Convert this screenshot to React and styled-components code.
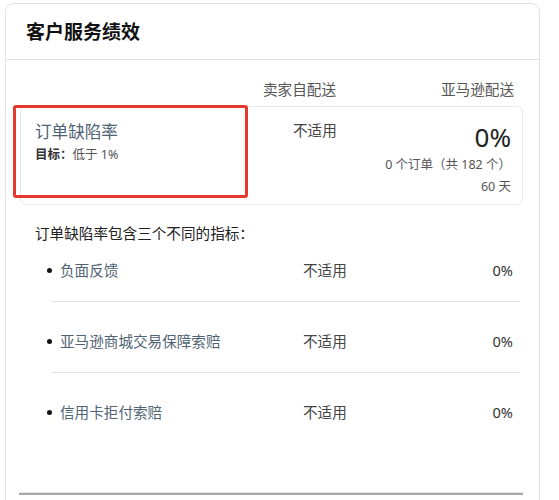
import React from "react";
import styled, { createGlobalStyle } from "styled-components";

const Global = createGlobalStyle`
  html, body { margin: 0; padding: 0; background: #ffffff; }
  body {
    font-family: "Noto Sans", "Noto Sans CJK SC", sans-serif;
    color: #333;
    overflow: hidden;
  }
`;

const Card = styled.section`
  box-sizing: border-box;
  margin: 3px 0 0 5px;
  width: 535px;
  min-height: 620px;
  border: 1px solid #e3e3e3;
  border-radius: 8px;
  background: #fff;
`;

const Header = styled.header`
  height: 55px;
  display: flex;
  align-items: center;
  padding: 0 20px;
  border-bottom: 1px solid #e3e3e3;
`;

const Title = styled.h2`
  margin: -1px 0 0;
  font-size: 19px;
  font-weight: 700;
  color: #111;
`;

const Body = styled.div`
  padding: 0 16px 0 14px;
`;

const ColHeads = styled.div`
  display: grid;
  grid-template-columns: 243px 1fr auto;
  padding: 19px 9px 7px 0;
  font-size: 14.6px;
  line-height: 20px;
  color: #555;
`;

const MetricBox = styled.div`
  position: relative;
  box-sizing: border-box;
  height: 99px;
  display: grid;
  grid-template-columns: 258px 1fr auto;
  padding: 14px 11px 0 14px;
  border: 1px solid #e8e8e8;
  border-radius: 6px;
`;

const Highlight = styled.div`
  position: absolute;
  left: -8px;
  top: -2px;
  width: 235px;
  height: 93px;
  box-sizing: border-box;
  border: 3px solid #e5392e;
  border-radius: 3px;
  pointer-events: none;
`;

const Col = styled.div`
  display: flex;
  flex-direction: column;
  align-items: ${(p) => (p.$right ? "flex-end" : "flex-start")};
`;

const MetricName = styled.div`
  font-size: 16.6px;
  line-height: 22px;
  color: #4d6376;
`;

const Goal = styled.div`
  margin-top: 3px;
  font-size: 12.5px;
  line-height: 18px;
  color: #555;
  b { font-weight: 700; color: #333; }
`;

const NA = styled.div`
  font-size: 14.6px;
  line-height: 20px;
  color: #444;
  margin-top: ${(p) => p.$offset || 0}px;
`;

const BigValue = styled.div`
  font-size: 26px;
  line-height: 32px;
  color: #222;
`;

const Small = styled.div`
  margin-top: 2px;
  font-size: 12.5px;
  line-height: 20px;
  color: #555;
`;

const Desc = styled.p`
  margin: 18px 0 0 15px;
  font-size: 14.6px;
  line-height: 20px;
  color: #222;
`;

const List = styled.ul`
  list-style: none;
  margin: 0 3px 0 32px;
  padding: 0;
`;

const Row = styled.li`
  display: grid;
  grid-template-columns: 251px 1fr auto;
  align-items: center;
  padding: 29px 7px 21px 0;
  font-size: 14.6px;
  line-height: 20px;
  border-bottom: 1px solid #e2e2e2;
  &:first-child { padding-top: 17px; }
  &:last-child { border-bottom: none; }
`;

const Name = styled.span`
  display: flex;
  align-items: center;
  gap: 8px;
  margin-left: -5px;
  color: #4f6374;
`;

const Dot = styled.i`
  width: 5px;
  height: 5px;
  border-radius: 50%;
  background: #111;
  flex: none;
`;

const Cell = styled.span`
  color: ${(p) => p.$color || "#444"};
  text-align: ${(p) => (p.$right ? "right" : "left")};
`;

const Footer = styled.div`
  margin: 50px 0 0 -1px;
  height: 2px;
  background: #a9a9a9;
  box-shadow: 0 -1px 0 #e4e4e4;
`;

const items = [
  { name: "负面反馈", self: "不适用", fba: "0%" },
  { name: "亚马逊商城交易保障索赔", self: "不适用", fba: "0%" },
  { name: "信用卡拒付索赔", self: "不适用", fba: "0%" },
];

export default function App() {
  return (
    <>
      <Global />
      <Card>
        <Header>
          <Title>客户服务绩效</Title>
        </Header>
        <Body>
          <ColHeads>
            <span />
            <span>卖家自配送</span>
            <span>亚马逊配送</span>
          </ColHeads>
          <MetricBox>
            <Highlight />
            <Col>
              <MetricName>订单缺陷率</MetricName>
              <Goal>
                <b>目标：</b>低于 1%
              </Goal>
            </Col>
            <Col>
              <NA $offset={-1}>不适用</NA>
            </Col>
            <Col $right>
              <BigValue>0%</BigValue>
              <Small>0 个订单（共 182 个）</Small>
              <Small>60 天</Small>
            </Col>
          </MetricBox>
          <Desc>订单缺陷率包含三个不同的指标：</Desc>
          <List>
            {items.map((it) => (
              <Row key={it.name}>
                <Name>
                  <Dot />
                  {it.name}
                </Name>
                <Cell>{it.self}</Cell>
                <Cell $right $color="#333">
                  {it.fba}
                </Cell>
              </Row>
            ))}
          </List>
          <Footer />
        </Body>
      </Card>
    </>
  );
}
